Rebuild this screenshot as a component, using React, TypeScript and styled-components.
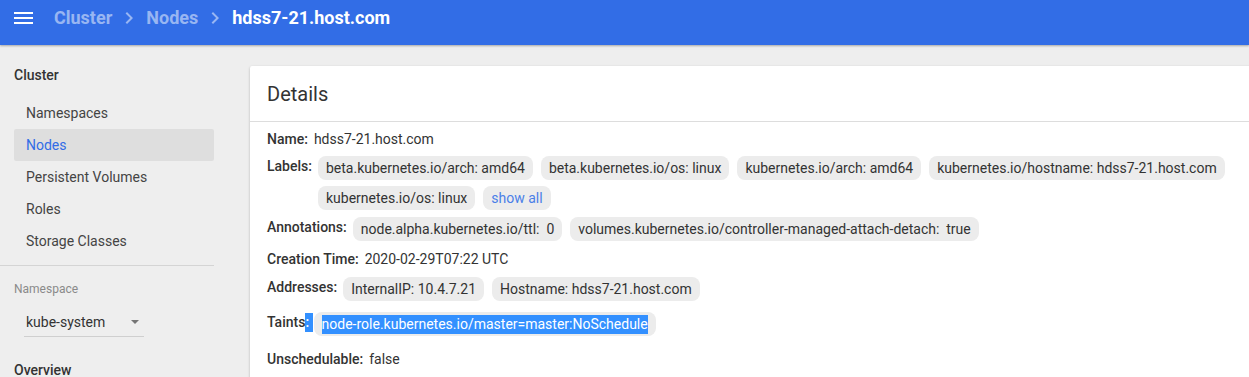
import styled, { createGlobalStyle } from "styled-components";

const GlobalStyle = createGlobalStyle`
  html, body {
    margin: 0;
    padding: 0;
    overflow: hidden;
    background: #eeeeee;
    font-family: Roboto, "Liberation Sans", sans-serif;
    color: rgba(0, 0, 0, 0.87);
  }
  ::selection {
    background: #3390ff;
    color: #ffffff;
  }
`;

const Toolbar = styled.header`
  height: 45px;
  box-sizing: border-box;
  padding: 0 14px 9px;
  display: flex;
  align-items: center;
  background: #326de6;
  box-shadow: 0 1px 2px rgba(0, 0, 0, 0.3);
  position: relative;
  z-index: 1;
`;

const MenuButton = styled.svg`
  width: 20px;
  height: 14px;
  margin-right: 20px;
  fill: #ffffff;
`;

const Crumb = styled.span<{ $current?: boolean }>`
  font-size: 18px;
  font-weight: 700;
  line-height: 24px;
  color: ${p => (p.$current ? `#ffffff` : `rgba(255, 255, 255, 0.5)`)};
`;

const Chevron = styled.svg`
  width: 24px;
  height: 24px;
  margin: 0 5px;
  fill: rgba(255, 255, 255, 0.5);
`;

const Layout = styled.div`
  display: flex;
  align-items: flex-start;
`;

const Sidebar = styled.nav`
  flex: 0 0 214px;
  padding-top: 20px;
`;

const GroupTitle = styled.div<{ $gap?: number }>`
  padding-left: 14px;
  margin-top: ${p => p.$gap ?? 0}px;
  font-size: 14px;
  font-weight: 500;
  line-height: 20px;
  color: #333333;
`;

const NavList = styled.div`
  margin-top: 12px;
  display: flex;
  flex-direction: column;
`;

const NavItem = styled.div<{ $active?: boolean }>`
  margin-left: 14px;
  padding-left: 12px;
  height: 32px;
  line-height: 32px;
  font-size: 14px;
  border-radius: 2px;
  color: ${p => (p.$active ? `#326de6` : `#444444`)};
  background: ${p => (p.$active ? `#dedede` : `transparent`)};
`;

const Divider = styled.hr`
  margin: 8px 0 0;
  border: 0;
  height: 1px;
  background: #d4d4d4;
`;

const SmallLabel = styled.div`
  margin-top: 15px;
  padding-left: 14px;
  font-size: 12px;
  line-height: 16px;
  color: #8a8a8a;
`;

const Select = styled.div`
  margin: 15px 0 0 24px;
  width: 120px;
  box-sizing: border-box;
  padding: 0 5px 4px 2px;
  display: flex;
  align-items: center;
  justify-content: space-between;
  border-bottom: 1px solid #cfcfcf;
  font-size: 14px;
  line-height: 20px;
  color: #333333;
`;

const Caret = styled.span`
  width: 0;
  height: 0;
  border-left: 4px solid transparent;
  border-right: 4px solid transparent;
  border-top: 4px solid #757575;
`;

const Main = styled.main`
  flex: 1;
  padding: 21px 0 0 36px;
`;

const Card = styled.section`
  width: 1015px;
  background: #ffffff;
  border-radius: 2px;
  box-shadow: 0 1px 3px rgba(0, 0, 0, 0.2), 0 1px 1px rgba(0, 0, 0, 0.12);
`;

const CardHeader = styled.h2`
  margin: 0;
  height: 56px;
  box-sizing: border-box;
  padding: 0 17px;
  display: flex;
  align-items: center;
  font-size: 20px;
  font-weight: 400;
  color: #333333;
  border-bottom: 1px solid #dddddd;
`;

const CardBody = styled.div`
  padding: 7px 16px 20px 17px;
  display: flex;
  flex-direction: column;
`;

const Row = styled.div<{ $gap?: number }>`
  display: flex;
  align-items: flex-start;
  margin-top: ${p => p.$gap ?? 7}px;
  font-size: 14px;
  line-height: 20px;
`;

const Key = styled.span<{ $tight?: boolean }>`
  flex: none;
  font-weight: 500;
  color: #333333;
  margin-right: ${p => (p.$tight ? 1 : 6)}px;
`;

const Value = styled.span`
  color: #333333;
`;

const Chips = styled.div`
  display: flex;
  flex-wrap: wrap;
  gap: 6px 8px;
`;

const Chip = styled.span<{ $link?: boolean }>`
  height: 24px;
  padding: 0 8px;
  line-height: 24px;
  font-size: 14px;
  white-space: pre;
  border-radius: 8px;
  background: #ececec;
  color: ${p => (p.$link ? `#4a7fe8` : `#333333`)};
`;

const Selected = styled.span`
  background: #3390ff;
  color: #ffffff;
  padding: 1px 0 2px;
`;

const labels = [
  "beta.kubernetes.io/arch: amd64",
  "beta.kubernetes.io/os: linux",
  "kubernetes.io/arch: amd64",
  "kubernetes.io/hostname: hdss7-21.host.com",
  "kubernetes.io/os: linux",
];

const annotations = [
  "node.alpha.kubernetes.io/ttl:  0",
  "volumes.kubernetes.io/controller-managed-attach-detach:  true",
];

const addresses = ["InternalIP: 10.4.7.21", "Hostname: hdss7-21.host.com"];

const clusterLinks = ["Namespaces", "Nodes", "Persistent Volumes", "Roles", "Storage Classes"];

function ChevronIcon() {
  return (
    <Chevron viewBox="0 0 24 24">
      <path d="M10 6 8.59 7.41 13.17 12l-4.58 4.59L10 18l6-6z" />
    </Chevron>
  );
}

export default function App() {
  return (
    <>
      <GlobalStyle />
      <Toolbar>
        <MenuButton viewBox="0 0 20 14">
          <rect x="0" y="1" width="19" height="2" />
          <rect x="0" y="6" width="19" height="2" />
          <rect x="0" y="11" width="19" height="2" />
        </MenuButton>
        <Crumb>Cluster</Crumb>
        <ChevronIcon />
        <Crumb>Nodes</Crumb>
        <ChevronIcon />
        <Crumb $current>hdss7-21.host.com</Crumb>
      </Toolbar>
      <Layout>
        <Sidebar>
          <GroupTitle>Cluster</GroupTitle>
          <NavList>
            {clusterLinks.map(name => (
              <NavItem key={name} $active={name === "Nodes"}>{name}</NavItem>
            ))}
          </NavList>
          <Divider />
          <SmallLabel>Namespace</SmallLabel>
          <Select>
            <span>kube-system</span>
            <Caret />
          </Select>
          <GroupTitle $gap={23}>Overview</GroupTitle>
        </Sidebar>
        <Main>
          <Card>
            <CardHeader>Details</CardHeader>
            <CardBody>
              <Row $gap={0}>
                <Key>Name:</Key>
                <Value>hdss7-21.host.com</Value>
              </Row>
              <Row>
                <Key>Labels:</Key>
                <Chips>
                  {labels.map(l => <Chip key={l}>{l}</Chip>)}
                  <Chip $link>show all</Chip>
                </Chips>
              </Row>
              <Row>
                <Key>Annotations:</Key>
                <Chips>
                  {annotations.map(a => <Chip key={a}>{a}</Chip>)}
                </Chips>
              </Row>
              <Row $gap={8}>
                <Key>Creation Time:</Key>
                <Value>2020-02-29T07:22 UTC</Value>
              </Row>
              <Row $gap={8}>
                <Key>Addresses:</Key>
                <Chips>
                  {addresses.map(a => <Chip key={a}>{a}</Chip>)}
                </Chips>
              </Row>
              <Row $gap={11}>
                <Key $tight>Taints<Selected>:&nbsp;</Selected></Key>
                <Chips>
                  <Chip><Selected>node-role.kubernetes.io/master=master:NoSchedule</Selected></Chip>
                </Chips>
              </Row>
              <Row $gap={13}>
                <Key>Unschedulable:</Key>
                <Value>false</Value>
              </Row>
            </CardBody>
          </Card>
        </Main>
      </Layout>
    </>
  );
}
